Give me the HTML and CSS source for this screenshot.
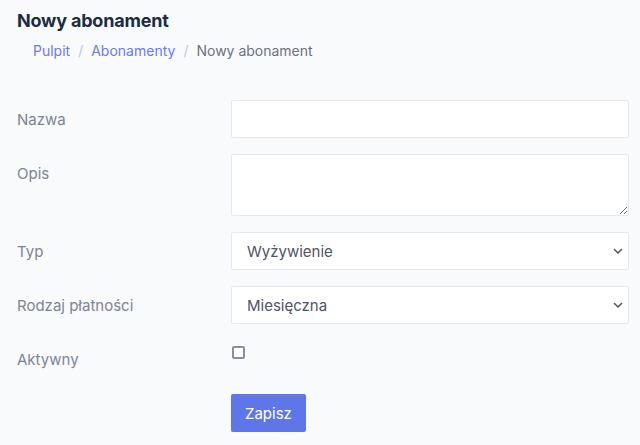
FILE: index.html
```html
<!DOCTYPE html>
<html lang="pl">
<head>
<meta charset="utf-8">
<link rel="stylesheet" href="styles.css">
</head>
<body>
<div class="page">
  <h1 class="title">Nowy abonament</h1>
  <nav class="crumbs">
    <a href="#">Pulpit</a><span class="sep">/</span><a href="#">Abonamenty</a><span class="sep">/</span><span class="current">Nowy abonament</span>
  </nav>
  <form class="form">
    <div class="row">
      <label class="lbl">Nazwa</label>
      <div class="field"><input class="ctrl" type="text"></div>
    </div>
    <div class="row">
      <label class="lbl">Opis</label>
      <div class="field"><textarea class="ctrl area"></textarea></div>
    </div>
    <div class="row">
      <label class="lbl">Typ</label>
      <div class="field sel">
        <select class="ctrl"><option>Wyżywienie</option></select>
        <svg class="chev" width="10" height="6" viewBox="0 0 10 6"><path d="M1 1l4 4 4-4" fill="none" stroke="#4f5467" stroke-width="1.5"/></svg>
      </div>
    </div>
    <div class="row">
      <label class="lbl">Rodzaj płatności</label>
      <div class="field sel">
        <select class="ctrl"><option>Miesięczna</option></select>
        <svg class="chev" width="10" height="6" viewBox="0 0 10 6"><path d="M1 1l4 4 4-4" fill="none" stroke="#4f5467" stroke-width="1.5"/></svg>
      </div>
    </div>
    <div class="row">
      <label class="lbl">Aktywny</label>
      <div class="field"><input class="check" type="checkbox"></div>
    </div>
    <div class="row">
      <div class="lbl"></div>
      <div class="field"><button class="btn" type="button">Zapisz</button></div>
    </div>
  </form>
</div>
</body>
</html>
```
FILE: styles.css
```css
* { box-sizing: border-box; }
html, body { margin: 0; padding: 0; background: #f9fafc; }
body { font-family: "Inter", "Noto Sans", sans-serif; color: #4f5467; }
.page { padding: 9px 11px 0 17px; }
.title { margin: 0; font-size: 18px; font-weight: 700; color: #1c2d41; line-height: 24px; letter-spacing: -0.2px; }
.crumbs { margin-top: 8px; padding-left: 16px; font-size: 14px; line-height: 20px; height: 20px; }
.crumbs a { color: #6f78ec; text-decoration: none; }
.crumbs .sep { color: #c4c7d0; padding: 0 8px; }
.crumbs .current { color: #6c7180; }
.form { margin-top: 39px; display: flex; flex-direction: column; gap: 16px; }
.row { display: flex; }
.lbl { width: 214px; min-height: 38px; flex: none; font-size: 15px; color: #7c8597; padding-top: 9px; line-height: 22px; }
.field { flex: 1; position: relative; }
.ctrl { display: block; width: 100%; height: 38px; border: 1px solid #e6e8ee; border-radius: 2px; background: #fff; font-family: inherit; font-size: 15px; color: #4f5467; padding: 0 15px; outline: none; }
.area { height: 62px; resize: vertical; }
select.ctrl { -webkit-appearance: none; appearance: none; }
.chev { position: absolute; right: 6px; top: 16px; }
.check { -webkit-appearance: none; appearance: none; width: 13px; height: 13px; margin: 6px 0 0 1px; border: 2px solid #8b8e9e; border-radius: 2px; background: #fff; }
.btn { height: 38px; padding: 0 14px; border: 0; border-radius: 2px; background: #5f76e8; color: #fff; font-family: inherit; font-size: 15px; }
```
